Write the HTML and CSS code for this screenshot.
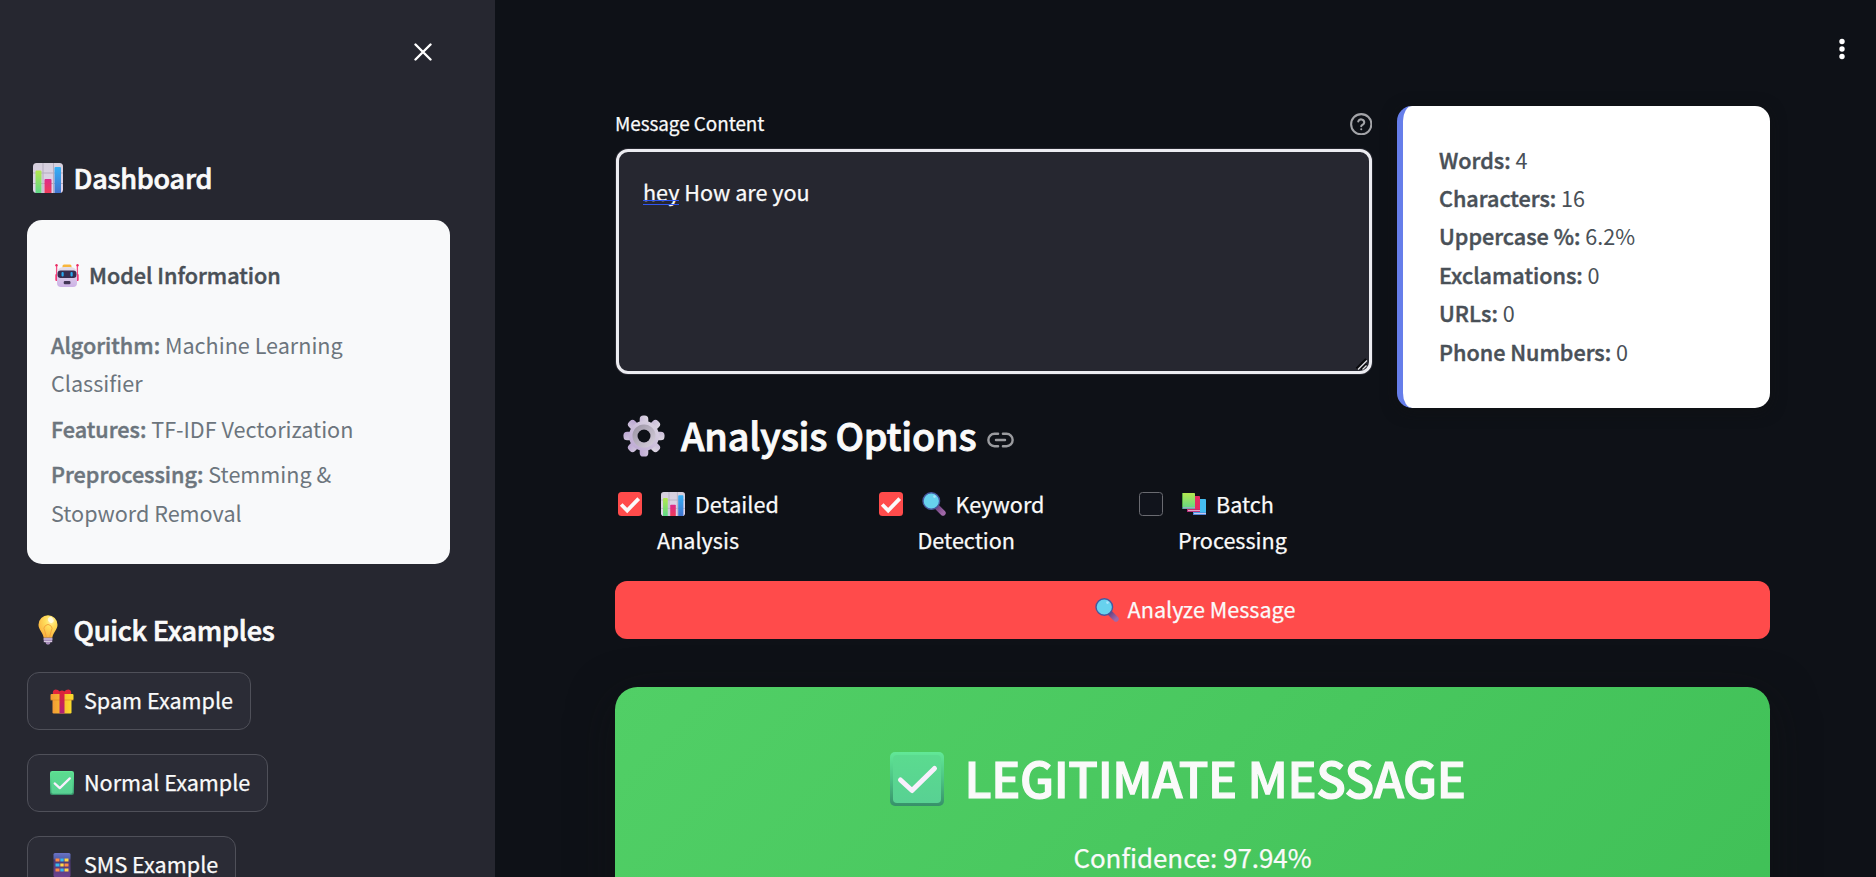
FILE: index.html
```html
<!DOCTYPE html>
<html lang="en">
<head>
<meta charset="utf-8">
<title>Message Analyzer</title>
<link rel="stylesheet" href="styles.css">
</head>
<body>
<svg class="defs" width="0" height="0" aria-hidden="true">
  <defs>
    <linearGradient id="gGreen" x1="0" y1="0" x2="0" y2="1"><stop offset="0" stop-color="#b4e84f"/><stop offset="1" stop-color="#5fd888"/></linearGradient>
    <linearGradient id="gPink" x1="0" y1="0" x2="0" y2="1"><stop offset="0" stop-color="#dd2a8b"/><stop offset="1" stop-color="#ee3c58"/></linearGradient>
    <linearGradient id="gBlue" x1="0" y1="0" x2="0" y2="1"><stop offset="0" stop-color="#34b0f7"/><stop offset="1" stop-color="#4274cf"/></linearGradient>
    <linearGradient id="gPaper" x1="0" y1="0" x2="0" y2="1"><stop offset="0" stop-color="#d5cfdc"/><stop offset="1" stop-color="#e2d5ee"/></linearGradient>
    <linearGradient id="gRobot" x1="0" y1="0" x2="0" y2="1"><stop offset="0" stop-color="#e4dfe9"/><stop offset="1" stop-color="#cdb2e6"/></linearGradient>
    <radialGradient id="gBulb" cx=".65" cy=".25" r=".8"><stop offset="0" stop-color="#fff3a8"/><stop offset=".35" stop-color="#ffdf5c"/><stop offset="1" stop-color="#fbae3c"/></radialGradient>
    <linearGradient id="gGift" x1="0" y1="0" x2="1" y2="0"><stop offset="0" stop-color="#f49a35"/><stop offset="1" stop-color="#fbdc2c"/></linearGradient>
    <linearGradient id="gRibbon" x1="0" y1="0" x2="0" y2="1"><stop offset="0" stop-color="#de2336"/><stop offset="1" stop-color="#b02279"/></linearGradient>
    <linearGradient id="gPhone" x1="0" y1="0" x2="0" y2="1"><stop offset="0" stop-color="#6a72c4"/><stop offset=".22" stop-color="#5461ad"/><stop offset=".3" stop-color="#4b3a75"/><stop offset="1" stop-color="#6c428f"/></linearGradient>
    <linearGradient id="gGear" x1="1" y1="0" x2="0" y2="1"><stop offset="0" stop-color="#ddd8e2"/><stop offset="1" stop-color="#bba6d3"/></linearGradient>
    <linearGradient id="gRing" x1="0" y1="0" x2="1" y2="1"><stop offset="0" stop-color="#9f98a8"/><stop offset="1" stop-color="#d3ccd9"/></linearGradient>
    <linearGradient id="gEdge" x1="0" y1="0" x2="0" y2="1"><stop offset="0" stop-color="#62e897"/><stop offset=".5" stop-color="#4cc384"/><stop offset="1" stop-color="#37906a"/></linearGradient>
    <linearGradient id="gFace" x1="0" y1="0" x2="0" y2="1"><stop offset="0" stop-color="#5bdb8f"/><stop offset="1" stop-color="#58d193"/></linearGradient>
    <linearGradient id="gHandle" x1="0" y1="0" x2="1" y2="1"><stop offset="0" stop-color="#6b3f7c"/><stop offset="1" stop-color="#a068a8"/></linearGradient>
  </defs>
  <symbol id="chart" viewBox="0 0 30 30">
    <rect width="30" height="30" rx="3.500" fill="url(#gPaper)"/>
    <path d="M0 10h30M0 20.500h30M10 0v30M20.500 0v30" stroke="#b4adbf" stroke-width="1"/>
    <path d="M2.500 8.500q0-1 1-1h4q1 0 1 1V30h-6z" fill="url(#gGreen)"/>
    <path d="M11.500 17q0-1 1-1h5q1 0 1 1v13h-7z" fill="url(#gPink)"/>
    <path d="M21.500 5q0-1 1-1h4.500q1 0 1 1v25h-6.500z" fill="url(#gBlue)"/>
  </symbol>
  <symbol id="robot" viewBox="0 0 24 24">
    <path d="M1.600 2v14M22.400 2v14" stroke="#f64e86" stroke-width="1.300"/>
    <circle cx="1.500" cy="1.300" r="1.200" fill="#e82b60"/><circle cx="22.500" cy="1.300" r="1.200" fill="#e82b60"/>
    <rect x=".3" y="10" width="4" height="7" rx="1" fill="#f43876"/><rect x="19.700" y="10" width="4" height="7" rx="1" fill="#f43876"/>
    <rect x="7.500" y=".5" width="9" height="5" rx="1.500" fill="#f8b63c"/>
    <path d="M2 10q0-7 7-7h6q7 0 7 7v9q0 4-4 4H6q-4 0-4-4z" fill="url(#gRobot)"/>
    <rect x="2.500" y="6.500" width="19" height="7.500" rx="3.200" fill="#372c50"/>
    <rect x="6.500" y="8" width="2.200" height="4.500" rx="1" fill="#28a8ef"/><rect x="15.500" y="8" width="2.200" height="4.500" rx="1" fill="#28a8ef"/>
    <rect x="8.700" y="17" width="6.800" height="3.200" rx="1.200" fill="#433756"/>
  </symbol>
  <symbol id="bulb" viewBox="0 0 20 30">
    <path d="M10 .3a9.500 9.500 0 0 0-9.500 9.500c0 5 4.300 7.500 5.200 13h8.600c.9-5.500 5.200-8 5.200-13A9.500 9.500 0 0 0 10 .3z" fill="url(#gBulb)"/>
    <path d="M8.300 22l-1.500-6a4 4 0 1 1 6.400 0l-1.500 6" fill="none" stroke="#f5a43d" stroke-width="1"/>
    <ellipse cx="12.800" cy="5" rx="2.600" ry="3.200" fill="#fffbe6" opacity=".85" transform="rotate(-35 12.800 5)"/>
    <path d="M5.700 22.800h8.600v4.500H12.500q0 2.400-2.500 2.400t-2.500-2.400H5.700z" fill="#a58bb8"/>
    <path d="M5.500 24h9M6 26.500h8" stroke="#d7c9df" stroke-width="1"/>
  </symbol>
  <symbol id="gift" viewBox="0 0 23 25">
    <path d="M2.500 5.500Q1.500 1 5 .6q3 0 4 1.800 2.500-2 5 0Q15 .6 18 .6q3.500.4 2.500 4.900z" fill="#e3263c"/>
    <rect x="2" y="9" width="19" height="15.500" rx="1.200" fill="url(#gGift)"/>
    <rect x="0" y="5" width="23" height="6" rx="1" fill="url(#gGift)"/>
    <path d="M0 11h23" stroke="#dd8b24" stroke-width=".7"/>
    <path d="M9 2.500h5V24.500H9z" fill="url(#gRibbon)"/>
  </symbol>
  <symbol id="check" viewBox="0 0 54 54">
    <rect width="54" height="54" rx="5" fill="url(#gEdge)"/>
    <rect x="3" y="3" width="48" height="48" rx="4" fill="url(#gFace)"/>
    <path d="M10.500 28l11.500 10.500L44.500 16.500" fill="none" stroke="#f8effd" stroke-width="5" stroke-linecap="round" stroke-linejoin="round"/>
  </symbol>
  <symbol id="phone" viewBox="0 0 17 24">
    <rect width="17" height="24" rx="1.500" fill="url(#gPhone)"/>
    <path d="M2 5.500h4v3H2zM11 10.500h4v3h-4zM2 15.500h4v3H2z" fill="#ff8b46"/>
    <path d="M6.800 5.500h3.400v3H6.800zM2 10.500h4v3H2z" fill="#36baf0"/>
    <path d="M11 5.500h4v3h-4zM6.800 10.500h3.400v3H6.800zM11 15.500h4v3h-4z" fill="#ffd84b"/>
    <path d="M6.800 15.500h3.400v3H6.800z" fill="#36baf0"/>
  </symbol>
  <symbol id="gear" viewBox="-21 -21 42 42">
    <g fill="url(#gGear)">
      <rect x="-4.300" y="-20.500" width="8.600" height="41" rx="3.600"/>
      <rect x="-4.300" y="-20.500" width="8.600" height="41" rx="3.600" transform="rotate(45)"/>
      <rect x="-4.300" y="-20.500" width="8.600" height="41" rx="3.600" transform="rotate(90)"/>
      <rect x="-4.300" y="-20.500" width="8.600" height="41" rx="3.600" transform="rotate(135)"/>
      <circle r="15"/>
    </g>
    <circle r="9" fill="none" stroke="url(#gRing)" stroke-width="5"/>
    <circle r="6.500" fill="#0e1117"/>
  </symbol>
  <symbol id="search" viewBox="0 0 24 24">
    <path d="M14.500 14.500l6.500 6.500" stroke="url(#gHandle)" stroke-width="5.400" stroke-linecap="round"/>
    <circle cx="9.300" cy="9" r="8.300" fill="#67d2ee" stroke="#46589f" stroke-width="1.400"/>
    <circle cx="12.500" cy="4.600" r="1.300" fill="#a9e4fa"/>
  </symbol>
  <symbol id="books" viewBox="0 0 24 22">
    <rect x="11" y="6" width="13" height="16" rx=".8" fill="#45bdf0"/><path d="M11 19.500h13V22H11z" fill="#4a7fd8"/><path d="M12 20.600h12" stroke="#d3d0f1" stroke-width="1"/>
    <rect x="5" y="3" width="13" height="16" rx=".8" fill="#e52c62"/><path d="M5 16.500h13V19H5z" fill="#b52674"/><path d="M6 17.600h12" stroke="#e8b7d2" stroke-width="1"/>
    <rect x="0" y="0" width="13" height="16" rx=".8" fill="url(#gGreen)"/><path d="M0 14h13v2H0z" fill="#3c8680"/><path d="M1 14.900h12" stroke="#c8d8e4" stroke-width="1"/>
    <path d="M.5 0v14" stroke="#55a83f" stroke-width="1"/>
  </symbol>
  <symbol id="tick" viewBox="0 0 24 24"><path d="M3.200 12.500l6 6L20.700 6.700" fill="none" stroke="#fafafa" stroke-width="3.800"/></symbol>
</svg>

<div class="app">
  <aside class="sidebar">
    <div class="sidebar-head">
      <svg class="close" viewBox="0 0 18 18"><path d="M1.500 1.500l15 15M16.500 1.500l-15 15" stroke="#fff" stroke-width="2.400" stroke-linecap="round"/></svg>
    </div>
    <h3 class="side-title"><svg class="ico ico-30"><use href="#chart"/></svg><span>Dashboard</span></h3>
    <section class="model-card">
      <h4 class="model-title"><svg class="ico ico-24"><use href="#robot"/></svg><span>Model Information</span></h4>
      <p><strong>Algorithm:</strong> Machine Learning Classifier</p>
      <p><strong>Features:</strong> TF-IDF Vectorization</p>
      <p><strong>Preprocessing:</strong> Stemming &amp; Stopword Removal</p>
    </section>
    <h3 class="side-title quick"><svg class="ico ico-30"><use href="#bulb"/></svg><span>Quick Examples</span></h3>
    <div class="examples">
      <button class="example spam"><svg class="ico ico-25"><use href="#gift"/></svg><span>Spam Example</span></button>
      <button class="example normal"><svg class="ico ico-24"><use href="#check"/></svg><span>Normal Example</span></button>
      <button class="example sms"><svg class="ico ico-24"><use href="#phone"/></svg><span>SMS Example</span></button>
    </div>
  </aside>

  <main class="main">
    <header class="topbar">
      <svg class="dots" viewBox="0 0 6 22"><g fill="#fff"><circle cx="3" cy="3.500" r="2.700"/><circle cx="3" cy="11" r="2.700"/><circle cx="3" cy="18.500" r="2.700"/></g></svg>
    </header>
    <div class="content">
      <div class="input-row">
        <div class="field">
          <div class="label-row">
            <span class="label">Message Content</span>
            <svg class="help" viewBox="0 0 24 24" fill="none" stroke="#a3a4a8" stroke-width="2.200" stroke-linecap="round" stroke-linejoin="round"><circle cx="12" cy="12" r="10.800"/><path d="M8.800 9a3.300 3.300 0 0 1 6.400 1.100c0 2.200-3.200 2.700-3.200 4M12 17.300v.1"/></svg>
          </div>
          <div class="textarea"><span class="flagged">hey</span> How are you
            <svg class="grip" viewBox="0 0 14 14"><path d="M1.500 11.500L11 2M6 12.500l5.500-5.500" stroke="#08090c" stroke-width="2"/><path d="M3 12.500L12 3.500M7.500 12.500l4-4" stroke="#dcdcde" stroke-width="1.300"/></svg>
          </div>
        </div>
        <section class="stats">
          <div><strong>Words:</strong> 4</div>
          <div><strong>Characters:</strong> 16</div>
          <div><strong>Uppercase %:</strong> 6.2%</div>
          <div><strong>Exclamations:</strong> 0</div>
          <div><strong>URLs:</strong> 0</div>
          <div><strong>Phone Numbers:</strong> 0</div>
        </section>
      </div>

      <h2 class="options-title">
        <svg class="ico ico-gear"><use href="#gear"/></svg><span>Analysis Options</span>
        <svg class="link" viewBox="0 0 28 16" fill="none" stroke="#9a9b9f" stroke-width="2.500" stroke-linecap="round"><path d="M11.500 1.600H7.800a6.400 6.400 0 0 0 0 12.800h3.700M16.500 1.600h3.700a6.400 6.400 0 0 1 0 12.800h-3.700M9.300 8h9.400"/></svg>
      </h2>

      <div class="options">
        <label class="option"><span class="box on"><svg viewBox="0 0 24 24"><use href="#tick"/></svg></span><span class="option-text"><svg class="inline-ico"><use href="#chart"/></svg>Detailed<br>Analysis</span></label>
        <label class="option"><span class="box on"><svg viewBox="0 0 24 24"><use href="#tick"/></svg></span><span class="option-text"><svg class="inline-ico"><use href="#search"/></svg>Keyword<br>Detection</span></label>
        <label class="option"><span class="box"></span><span class="option-text"><svg class="inline-ico"><use href="#books"/></svg>Batch<br>Processing</span></label>
      </div>

      <button class="analyze"><svg class="ico ico-24"><use href="#search"/></svg><span>Analyze Message</span></button>

      <section class="result">
        <h1 class="verdict"><svg class="ico ico-54"><use href="#check"/></svg><span>LEGITIMATE MESSAGE</span></h1>
        <p class="confidence">Confidence: 97.94%</p>
      </section>
    </div>
  </main>
</div>
</body>
</html>
```
FILE: styles.css
```css
* { box-sizing: border-box; }

body {
  margin: 0;
  background: #0e1117;
  color: #fafafa;
  font-family: "Noto Sans CJK SC", "Noto Sans", sans-serif;
  font-size: 21.6px;
  -webkit-text-stroke: .25px currentColor;
  overflow: hidden;
}

h1, h2, h3, h4, p { margin: 0; font-weight: 500; }
strong { font-weight: 500; -webkit-text-stroke: .45px currentColor; }
button { font: inherit; color: inherit; margin: 0; }
.defs { position: absolute; }

.app { display: flex; height: 877px; overflow: hidden; }

/* Icons */
.ico { display: block; flex: none; }
.ico-24 { width: 24px; height: 24px; }
.ico-25 { width: 24px; height: 25px; }
.ico-30 { width: 30px; height: 30px; }
.ico-54 { width: 54px; height: 54px; }
.ico-gear { width: 42px; height: 42px; }

/* Sidebar */
.sidebar {
  flex: 0 0 495px;
  height: 877px;
  padding: 0 45px 0 27px;
  background: #262730;
  overflow: hidden;
}
.sidebar-head {
  display: flex;
  justify-content: flex-end;
  height: 159px;
  padding: 43px 18px 0 0;
}
.close { width: 18px; height: 18px; }

.side-title {
  display: flex;
  align-items: center;
  gap: 11px;
  height: 36px;
  padding-left: 5.500px;
  font-size: 27px;
  line-height: 36px;
  letter-spacing: -.2px;
  -webkit-text-stroke: .7px currentColor;
}
.side-title .ico { margin-top: 1px; }
.side-title span { padding-top: 2px; }
.side-title.quick { margin-top: 47px; }

.model-card {
  height: 344px;
  margin-top: 25px;
  padding: 37px 24px 0;
  border-radius: 15px;
  background: #f8f9fa;
  color: #6c757d;
  line-height: 38.4px;
  -webkit-text-stroke: 0;
}
.model-card p { margin-bottom: 7px; font-weight: 400; }
.model-title {
  display: flex;
  align-items: center;
  gap: 10px;
  height: 36px;
  margin-bottom: 33px;
  padding-left: 4px;
  color: #495057;
  line-height: 36px;
  -webkit-text-stroke: .45px currentColor;
}
.model-title .ico { margin-top: 2px; }

.examples {
  display: flex;
  flex-direction: column;
  align-items: flex-start;
  gap: 24px;
  margin-top: 25px;
}
.example {
  display: flex;
  align-items: center;
  gap: 10px;
  height: 58px;
  padding: 0 0 0 22px;
  border: 1px solid #4f5059;
  border-radius: 12px;
  background: #2b2c36;
  line-height: 36px;
  white-space: nowrap;
}
.example span, .analyze span { padding-bottom: 3px; }
.spam { width: 224px; }
.normal { width: 241px; }
.sms { width: 209px; }

/* Main area */
.main { flex: 1; min-width: 0; padding: 0 106px 0 120px; }
.topbar {
  display: flex;
  justify-content: flex-end;
  height: 106px;
  margin-right: -75px;
  padding-top: 38px;
}
.dots { width: 6px; height: 22px; }

.input-row { display: flex; justify-content: space-between; height: 302px; }
.field { width: 758px; }
.label-row {
  display: flex;
  align-items: center;
  justify-content: space-between;
  height: 36px;
  margin-bottom: 7px;
  padding-right: 1px;
  font-size: 18.9px;
  line-height: 36px;
  letter-spacing: -.05px;
}
.label { padding-bottom: 2px; }
.help { width: 22.500px; height: 22.500px; }
.textarea {
  position: relative;
  height: 225px;
  margin: 0 1px;
  padding: 23px 24px;
  border: 3px solid #ececf1;
  border-radius: 12px;
  background: #262730;
  box-shadow: 0 0 0 1px #26272f;
  line-height: 33.6px;
}
.flagged { position: relative; }
.flagged::after {
  content: "";
  position: absolute;
  left: 0;
  right: 0;
  bottom: 2px;
  height: 3px;
  border: solid #3157f0;
  border-width: 1px 0;
}
.grip { position: absolute; right: 0; bottom: 0; width: 14px; height: 14px; }

.stats {
  width: 373px;
  padding: 34.500px 36px 0;
  border-left: 6px solid #667eea;
  border-radius: 15px;
  background: #fff;
  box-shadow: 0 3px 15px rgba(17, 17, 17, .5);
  color: #495057;
  line-height: 38.4px;
  -webkit-text-stroke: 0;
}

.options-title {
  display: flex;
  align-items: center;
  height: 50px;
  margin-top: 2px;
  padding-left: 8px;
  font-size: 37.8px;
  line-height: 50px;
  letter-spacing: -.2px;
  -webkit-text-stroke: .9px currentColor;
}
.options-title .ico { margin: 2px 16px 0 0; }
.link { width: 27px; height: 16px; margin: 10px 0 0 11px; }

.options {
  display: grid;
  grid-template-columns: repeat(3, 260.500px);
  height: 96px;
  margin-top: 25.500px;
}
.option { display: flex; align-items: flex-start; }
.box {
  width: 24px;
  height: 24px;
  margin: 6.500px 15px 0 3px;
  border: 1px solid #6a6b71;
  border-radius: 3.500px;
  background: #11141c;
}
.box.on { border: 0; background: #ff4b4b; }
.box svg { display: block; width: 24px; height: 24px; }
.option-text { line-height: 36px; }
.inline-ico { width: 24px; height: 24px; margin: 0 10px 0 4px; vertical-align: -3px; }

.analyze {
  display: flex;
  align-items: center;
  justify-content: center;
  gap: 9px;
  width: 1155px;
  height: 58px;
  margin-top: -.5px;
  padding: 0 0 0 5px;
  border: 0;
  border-radius: 12px;
  background: #ff4b4b;
  line-height: 36px;
}

.result {
  width: 1155px;
  height: 260px;
  margin-top: 48px;
  padding-top: 57.500px;
  border-radius: 22.500px;
  background: linear-gradient(135deg, #51cf66, #40c057);
  box-shadow: 0 12px 45px rgba(17, 17, 17, .5);
}
.verdict {
  display: flex;
  align-items: center;
  justify-content: center;
  gap: 21px;
  height: 64px;
  padding-right: 30px;
  font-size: 48.6px;
  line-height: 64px;
  letter-spacing: -.38px;
  -webkit-text-stroke: 1.200px currentColor;
}
.verdict .ico { margin-top: 4px; }
.confidence {
  margin-top: 25px;
  font-size: 25.9px;
  font-weight: 400;
  line-height: 46px;
  text-align: center;
}
```
